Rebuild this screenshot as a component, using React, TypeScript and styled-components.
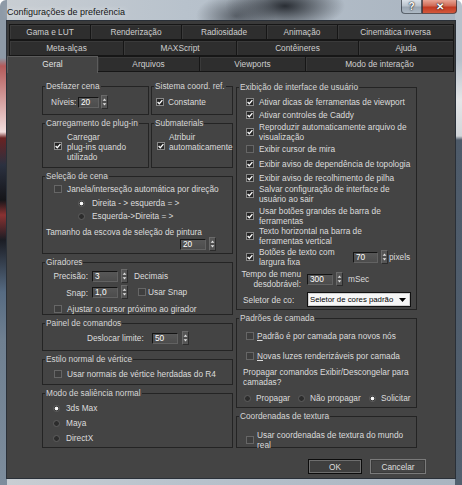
import React from "react";
import styled, { createGlobalStyle } from "styled-components";

const Global = createGlobalStyle`
  html, body { margin: 0; padding: 0; }
  body {
    width: 462px;
    height: 485px;
    overflow: hidden;
    font-family: "Liberation Sans", Arial, sans-serif;
  }
  * { box-sizing: border-box; }
`;

const Window = styled.div`
  width: 462px;
  height: 485px;
  display: flex;
  flex-direction: column;
  border-radius: 6px 6px 0 0;
  overflow: hidden;
  background:
    linear-gradient(
        to bottom,
        #8e9aa7 0,
        #8e9aa7 58px,
        #b45a5a 66px,
        #f2dede 132px,
        #6a2222 138px,
        #2b3140 165px,
        #151519 200px,
        #8a3232 215px,
        #1b1d24 240px,
        #566b82 292px,
        #6f8091 340px,
        #7d8d9d 100%
      )
      left top / 7px 100% no-repeat,
    linear-gradient(
        to bottom,
        #b7c1cb 0,
        #b7c1cb 60px,
        #e4e6e8 100px,
        #d2d6da 136px,
        #4d5a69 140px,
        #52606f 100%
      )
      right top / 7px 100% no-repeat,
    radial-gradient(ellipse 60px 24px at 285px 6px, rgba(34, 38, 44, 0.95), rgba(34, 38, 44, 0) 100%),
    radial-gradient(ellipse 40px 22px at 236px 16px, rgba(70, 76, 84, 0.8), rgba(70, 76, 84, 0) 100%),
    linear-gradient(to right, #c9ced3 0, #b8c2cc 40%, #a9b4c0 100%);
`;

const TitleBar = styled.div`
  height: 21px;
  flex: none;
  display: flex;
  justify-content: space-between;
  align-items: flex-start;
  padding-left: 7px;
`;

const Title = styled.div`
  margin-top: 7px;
  font-size: 9px;
  line-height: 10px;
  color: #141414;
  text-shadow: 0 0 6px rgba(255, 255, 255, 0.8);
`;

const Captions = styled.div`
  display: flex;
  margin-right: 5px;
`;

const CaptionBtn = styled.div<{ $w: number; $close?: boolean }>`
  width: ${(p) => p.$w}px;
  height: 14px;
  display: flex;
  align-items: center;
  justify-content: center;
  font-size: 10px;
  font-weight: bold;
  color: #fff;
  text-shadow: 0 0 2px #222, 0 0 1px #000;
  border: 1px solid rgba(40, 48, 58, 0.7);
  border-top: none;
  border-radius: ${(p) => (p.$close ? "0 0 4px 0" : "0 0 0 4px")};
  background: ${(p) =>
    p.$close
      ? "linear-gradient(to bottom, #e8a595 0, #d06a55 45%, #c23a22 55%, #d2583c 100%)"
      : "linear-gradient(to bottom, #dbe2e9 0, #b9c3cd 45%, #9aa6b2 55%, #aeb9c4 100%)"};
`;

const Client = styled.div`
  flex: 1;
  margin: 0 7px 7px;
  background: #444444;
  display: flex;
  flex-direction: column;
  box-shadow: 0 0 0 1px #2a3038;
  font-size: 8.3px;
  color: #dcdcdc;
`;

const TabStrip = styled.div`
  padding: 3px 0 0 2px;
  background: #3a3a3a;
`;

const TabRow = styled.div`
  display: flex;
  height: 16px;
`;

const Tab = styled.div<{ $w: number; $active?: boolean }>`
  width: ${(p) => p.$w}px;
  height: ${(p) => (p.$active ? 17 : 16)}px;
  margin-left: ${(p) => (p.$active ? -2 : 0)}px;
  position: relative;
  z-index: ${(p) => (p.$active ? 1 : 0)};
  text-align: center;
  line-height: 14px;
  color: ${(p) => (p.$active ? "#e2e2e2" : "#cfcfcf")};
  background: ${(p) => (p.$active ? "#444444" : "#2e2e2e")};
  border: 1px solid ${(p) => (p.$active ? "#5c5c5c" : "#161616")};
  border-bottom: ${(p) => (p.$active ? "none" : "1px solid #161616")};
  border-left-width: ${(p) => (p.$active ? 1 : 0)}px;
  &:first-child {
    border-left-width: 1px;
  }
  box-shadow: ${(p) => (p.$active ? "none" : "inset 1px 1px 0 #3a3a3a")};
  white-space: nowrap;
`;

const Page = styled.div`
  flex: 1;
  display: flex;
  flex-direction: column;
  padding: 10px 0 0 35px;
  background: #444444;
`;

const Columns = styled.div`
  display: flex;
  gap: 3px;
  align-items: flex-start;
`;

const Column = styled.div<{ $w: number; $mt?: number }>`
  width: ${(p) => p.$w}px;
  margin-top: ${(p) => p.$mt ?? 0}px;
  display: flex;
  flex-direction: column;
  gap: 4px;
`;

const Pair = styled.div`
  display: flex;
  gap: 2px;
`;

const Group = styled.fieldset<{ $h: number; $w?: number }>`
  margin: 0;
  padding: 0;
  min-width: 0;
  width: ${(p) => (p.$w ? `${p.$w}px` : "auto")};
  height: ${(p) => p.$h}px;
  border: 1px solid #242424;
  flex: none;
`;

const Legend = styled.legend`
  margin-left: 2px;
  padding: 0 1px;
  line-height: 9px;
  color: #d6d6d6;
  white-space: nowrap;
`;

const Row = styled.div<{ $mt?: number; $pl?: number; $top?: boolean }>`
  display: flex;
  align-items: ${(p) => (p.$top ? "flex-start" : "center")};
  margin-top: ${(p) => p.$mt ?? 0}px;
  padding-left: ${(p) => p.$pl ?? 0}px;
`;

const Text = styled.span<{ $w?: number; $right?: boolean; $ml?: number; $pl?: number; $pt?: number }>`
  display: block;
  flex: none;
  line-height: 10px;
  white-space: nowrap;
  width: ${(p) => (p.$w ? `${p.$w}px` : "auto")};
  text-align: ${(p) => (p.$right ? "right" : "left")};
  margin-left: ${(p) => p.$ml ?? 0}px;
  padding-left: ${(p) => p.$pl ?? 0}px;
  padding-top: ${(p) => p.$pt ?? 0}px;
`;

const Box = styled.span<{ $on?: boolean; $gap: number; $mt?: number; $ml?: number }>`
  width: 8px;
  height: 8px;
  flex: none;
  display: flex;
  align-items: center;
  justify-content: center;
  margin-right: ${(p) => p.$gap}px;
  margin-top: ${(p) => p.$mt ?? 0}px;
  margin-left: ${(p) => p.$ml ?? 0}px;
  background: ${(p) => (p.$on ? "#262626" : "#3e3e3e")};
  border: 1px solid ${(p) => (p.$on ? "#8a8a8a" : "#666666")};
`;

const Dot = styled.span<{ $on?: boolean; $gap: number }>`
  width: 7px;
  height: 7px;
  flex: none;
  border-radius: 50%;
  margin-right: ${(p) => p.$gap}px;
  background: ${(p) => (p.$on ? "radial-gradient(circle, #ffffff 0, #f0f0f0 1.6px, #2a2a2a 2.2px)" : "#2c2c2c")};
  border: 1px solid #5e5e5e;
`;

const RadioItem = styled.div<{ $w?: number }>`
  display: flex;
  align-items: center;
  width: ${(p) => (p.$w ? `${p.$w}px` : "auto")};
  flex: none;
`;

const SpinWrap = styled.div<{ $ml: number }>`
  display: flex;
  align-items: center;
  margin-left: ${(p) => p.$ml}px;
  flex: none;
`;

const SpinField = styled.div<{ $w: number }>`
  width: ${(p) => p.$w}px;
  height: 11px;
  padding-left: 2px;
  line-height: 9px;
  color: #ffffff;
  background: linear-gradient(to bottom, #575757, #4c4c4c);
  border-top: 1px solid #141414;
  border-left: 1px solid #141414;
  border-right: 1px solid #626262;
  border-bottom: 1px solid #626262;
`;

const SpinArrows = styled.span<{ $ml: number }>`
  width: 7px;
  height: 14px;
  margin-left: ${(p) => p.$ml}px;
  display: flex;
  background: #555555;
  border: 1px solid #6a6a6a;
  border-right-color: #2c2c2c;
  border-bottom-color: #2c2c2c;
`;

const Select = styled.div`
  width: 104px;
  height: 15px;
  margin-left: 6px;
  display: flex;
  align-items: center;
  justify-content: space-between;
  padding: 0 4px 0 2px;
  background: #f6f6f6;
  color: #000;
  border: 1px solid #101010;
  box-shadow: inset 0 0 0 1px #d0d0d0;
  font-size: 7.8px;
  line-height: 10px;
  white-space: nowrap;
  overflow: hidden;
`;

const U = styled.span`
  text-decoration: underline;
`;

const Footer = styled.div`
  display: flex;
  justify-content: flex-end;
  gap: 8px;
  margin-top: 11px;
  padding-right: 29px;
`;

const Btn = styled.button<{ $w: number; $def?: boolean }>`
  width: ${(p) => p.$w}px;
  height: 15px;
  padding: 0;
  font: inherit;
  font-size: 8.3px;
  line-height: 10px;
  color: #dedede;
  background: ${(p) => (p.$def ? "#3f3f3f" : "#454545")};
  border: 1px solid ${(p) => (p.$def ? "#0c0c0c" : "#7a7a7a")};
  box-shadow: ${(p) => (p.$def ? "inset 0 0 0 1px #6e6e6e" : "inset 0 0 0 1px #3a3a3a")};
`;

function Check({ on, gap = 5, mt, ml }: { on?: boolean; gap?: number; mt?: number; ml?: number }) {
  return (
    <Box $on={on} $gap={gap} $mt={mt} $ml={ml}>
      {on && (
        <svg width="6" height="6" viewBox="0 0 6 6">
          <path d="M0.6 3 L2.3 4.7 L5.4 1.1" fill="none" stroke="#ffffff" strokeWidth="1.3" />
        </svg>
      )}
    </Box>
  );
}

function Spinner({ value, w, ml = 0, gap = 3 }: { value: string; w: number; ml?: number; gap?: number }) {
  return (
    <SpinWrap $ml={ml}>
      <SpinField $w={w}>{value}</SpinField>
      <SpinArrows $ml={gap}>
        <svg width="5" height="12" viewBox="0 0 5 12">
          <path d="M2.5 2.5 L4.3 4.8 L0.7 4.8 Z" fill="#e4e4e4" />
          <line x1="0" y1="6" x2="5" y2="6" stroke="#444" strokeWidth="0.8" />
          <path d="M0.7 7.3 L4.3 7.3 L2.5 9.6 Z" fill="#e4e4e4" />
        </svg>
      </SpinArrows>
    </SpinWrap>
  );
}

const tabRows: { label: string; w: number; active?: boolean }[][] = [
  [
    { label: "Gama e LUT", w: 82 },
    { label: "Renderização", w: 91 },
    { label: "Radiosidade", w: 85 },
    { label: "Animação", w: 71 },
    { label: "Cinemática inversa", w: 116 },
  ],
  [
    { label: "Meta-alças", w: 115 },
    { label: "MAXScript", w: 113 },
    { label: "Contêineres", w: 122 },
    { label: "Ajuda", w: 95 },
  ],
  [
    { label: "Geral", w: 91, active: true },
    { label: "Arquivos", w: 102 },
    { label: "Viewports", w: 106 },
    { label: "Modo de interação", w: 148 },
  ],
];

const uiOptions: { text: React.ReactNode; on: boolean; mt: number }[] = [
  { text: "Ativar dicas de ferramentas de viewport", on: true, mt: 5 },
  { text: "Ativar controles de Caddy", on: true, mt: 3 },
  { text: <>Reproduzir automaticamente arquivo de<br />visualização</>, on: true, mt: 2 },
  { text: "Exibir cursor de mira", on: false, mt: 2 },
  { text: "Exibir aviso de dependência de topologia", on: true, mt: 5 },
  { text: "Exibir aviso de recolhimento de pilha", on: true, mt: 4 },
  { text: <>Salvar configuração de interface de<br />usuário ao sair</>, on: true, mt: 1 },
  { text: <>Usar botões grandes de barra de<br />ferramentas</>, on: true, mt: 2 },
  { text: <>Texto horizontal na barra de<br />ferramentas vertical</>, on: true, mt: 0 },
];

export default function App() {
  return (
    <Window>
      <Global />
      <TitleBar>
        <Title>Configurações de preferência</Title>
        <Captions>
          <CaptionBtn $w={21}>?</CaptionBtn>
          <CaptionBtn $w={35} $close>
            ✕
          </CaptionBtn>
        </Captions>
      </TitleBar>
      <Client>
        <TabStrip>
          {tabRows.map((row, i) => (
            <TabRow key={i}>
              {row.map((t) => (
                <Tab key={t.label} $w={t.w} $active={t.active}>
                  {t.label}
                </Tab>
              ))}
            </TabRow>
          ))}
        </TabStrip>
        <Page>
          <Columns>
            <Column $w={191}>
              <Pair>
                <Group $h={33} $w={107}>
                  <Legend>Desfazer cena</Legend>
                  <Row $mt={4} $pl={8}>
                    <Text $w={27}>Níveis:</Text>
                    <Spinner value="20" w={21} gap={2} />
                  </Row>
                </Group>
                <Group $h={33} $w={82}>
                  <Legend>Sistema coord. ref.</Legend>
                  <Row $mt={6} $pl={4}>
                    <Check on gap={4} />
                    <Text>Constante</Text>
                  </Row>
                </Group>
              </Pair>
              <Pair>
                <Group $h={49} $w={107}>
                  <Legend>Carregamento de plug-in</Legend>
                  <Row $mt={3.5} $pl={11} $top>
                    <Check on mt={10.5} />
                    <Text>
                      Carregar
                      <br />
                      plug-ins quando
                      <br />
                      utilizado
                    </Text>
                  </Row>
                </Group>
                <Group $h={49} $w={82}>
                  <Legend>Submaterials</Legend>
                  <Row $mt={3.5} $pl={5} $top>
                    <Check on mt={10.5} gap={4} />
                    <Text>
                      Atribuir
                      <br />
                      automaticamente
                    </Text>
                  </Row>
                </Group>
              </Pair>
              <Group $h={82}>
                <Legend>Seleção de cena</Legend>
                <Row $mt={3} $pl={11}>
                  <Check />
                  <Text>Janela/interseção automática por direção</Text>
                </Row>
                <Row $mt={4} $pl={35}>
                  <Dot $on $gap={7} />
                  <Text>Direita - &gt; esquerda = &gt;</Text>
                </Row>
                <Row $mt={3} $pl={35}>
                  <Dot $gap={7} />
                  <Text>Esquerda-&gt;Direita = &gt;</Text>
                </Row>
                <Row $mt={6} $pl={3}>
                  <Text>Tamanho da escova de seleção de pintura</Text>
                </Row>
                <Row $pl={137}>
                  <Spinner value="20" w={26} />
                </Row>
              </Group>
              <Group $h={57}>
                <Legend>Giradores</Legend>
                <Row $mt={2}>
                  <Text $w={45} $right>
                    Precisão:
                  </Text>
                  <Spinner value="3" w={26} ml={4} />
                  <Text $ml={6}>Decimais</Text>
                </Row>
                <Row $mt={2}>
                  <Text $w={45} $right $pt={2}>
                    Snap:
                  </Text>
                  <Spinner value="1,0" w={26} ml={4} />
                  <Check ml={10} gap={2} />
                  <Text>Usar Snap</Text>
                </Row>
                <Row $mt={5} $pl={11}>
                  <Check />
                  <Text>Ajustar o cursor próximo ao girador</Text>
                </Row>
              </Group>
              <Group $h={32}>
                <Legend>Painel de comandos</Legend>
                <Row $mt={3} $pl={44}>
                  <Text $w={65}>Deslocar limite:</Text>
                  <Spinner value="50" w={26} gap={4} />
                </Row>
              </Group>
              <Group $h={30}>
                <Legend>Estilo normal de vértice</Legend>
                <Row $mt={5} $pl={11}>
                  <Check />
                  <Text>Usar normais de vértice herdadas do R4</Text>
                </Row>
              </Group>
              <Group $h={59}>
                <Legend>Modo de saliência normal</Legend>
                <Row $mt={5} $pl={10}>
                  <Dot $on $gap={6} />
                  <Text>3ds Max</Text>
                </Row>
                <Row $mt={5} $pl={10}>
                  <Dot $gap={6} />
                  <Text>Maya</Text>
                </Row>
                <Row $mt={5} $pl={10}>
                  <Dot $gap={6} />
                  <Text>DirectX</Text>
                </Row>
              </Group>
            </Column>

            <Column $w={181} $mt={1}>
              <Group $h={227}>
                <Legend>Exibição de interface de usuário</Legend>
                {uiOptions.map((o, i) => (
                  <Row key={i} $mt={o.mt} $pl={9}>
                    <Check on={o.on} />
                    <Text>{o.text}</Text>
                  </Row>
                ))}
                <Row $mt={1} $pl={9}>
                  <Check on />
                  <Text $w={90}>
                    Botões de texto com
                    <br />
                    largura fixa
                  </Text>
                  <Spinner value="70" w={25} ml={4} />
                  <Text $ml={1}>pixels</Text>
                </Row>
                <Row $mt={2}>
                  <Text $w={64} $right>
                    Tempo de menu
                    <br />
                    desdobrável:
                  </Text>
                  <Spinner value="300" w={26} ml={6} />
                  <Text $ml={5}>mSec</Text>
                </Row>
                <Row $mt={3}>
                  <Text $w={64} $pl={6}>
                    Seletor de co:
                  </Text>
                  <Select>
                    <span>Seletor de cores padrão</span>
                    <svg width="7" height="4" viewBox="0 0 7 4">
                      <path d="M0 0 L7 0 L3.5 4 Z" fill="#000" />
                    </svg>
                  </Select>
                </Row>
              </Group>
              <Group $h={94}>
                <Legend>Padrões de camada</Legend>
                <Row $mt={8} $pl={9}>
                  <Check gap={3} />
                  <Text>
                    <U>P</U>adrão é por camada para novos nós
                  </Text>
                </Row>
                <Row $mt={10} $pl={9}>
                  <Check gap={3} />
                  <Text>
                    <U>N</U>ovas luzes renderizáveis por camada
                  </Text>
                </Row>
                <Row $mt={6} $pl={6}>
                  <Text>
                    Propagar comandos Exibir/Descongelar para
                    <br />
                    camadas?
                  </Text>
                </Row>
                <Row $mt={6} $pl={7}>
                  <RadioItem $w={54}>
                    <Dot $gap={5} />
                    <Text>Propagar</Text>
                  </RadioItem>
                  <RadioItem $w={71}>
                    <Dot $gap={5} />
                    <Text>Não propagar</Text>
                  </RadioItem>
                  <RadioItem>
                    <Dot $on $gap={5} />
                    <Text>Solicitar</Text>
                  </RadioItem>
                </Row>
              </Group>
              <Group $h={36}>
                <Legend>Coordenadas de textura</Legend>
                <Row $mt={8.5} $pl={9}>
                  <Check gap={3} />
                  <Text>
                    Usar coordenadas de textura do mundo
                    <br />
                    real
                  </Text>
                </Row>
              </Group>
            </Column>
          </Columns>
          <Footer>
            <Btn $w={54} $def>
              OK
            </Btn>
            <Btn $w={56}>Cancelar</Btn>
          </Footer>
        </Page>
      </Client>
    </Window>
  );
}
